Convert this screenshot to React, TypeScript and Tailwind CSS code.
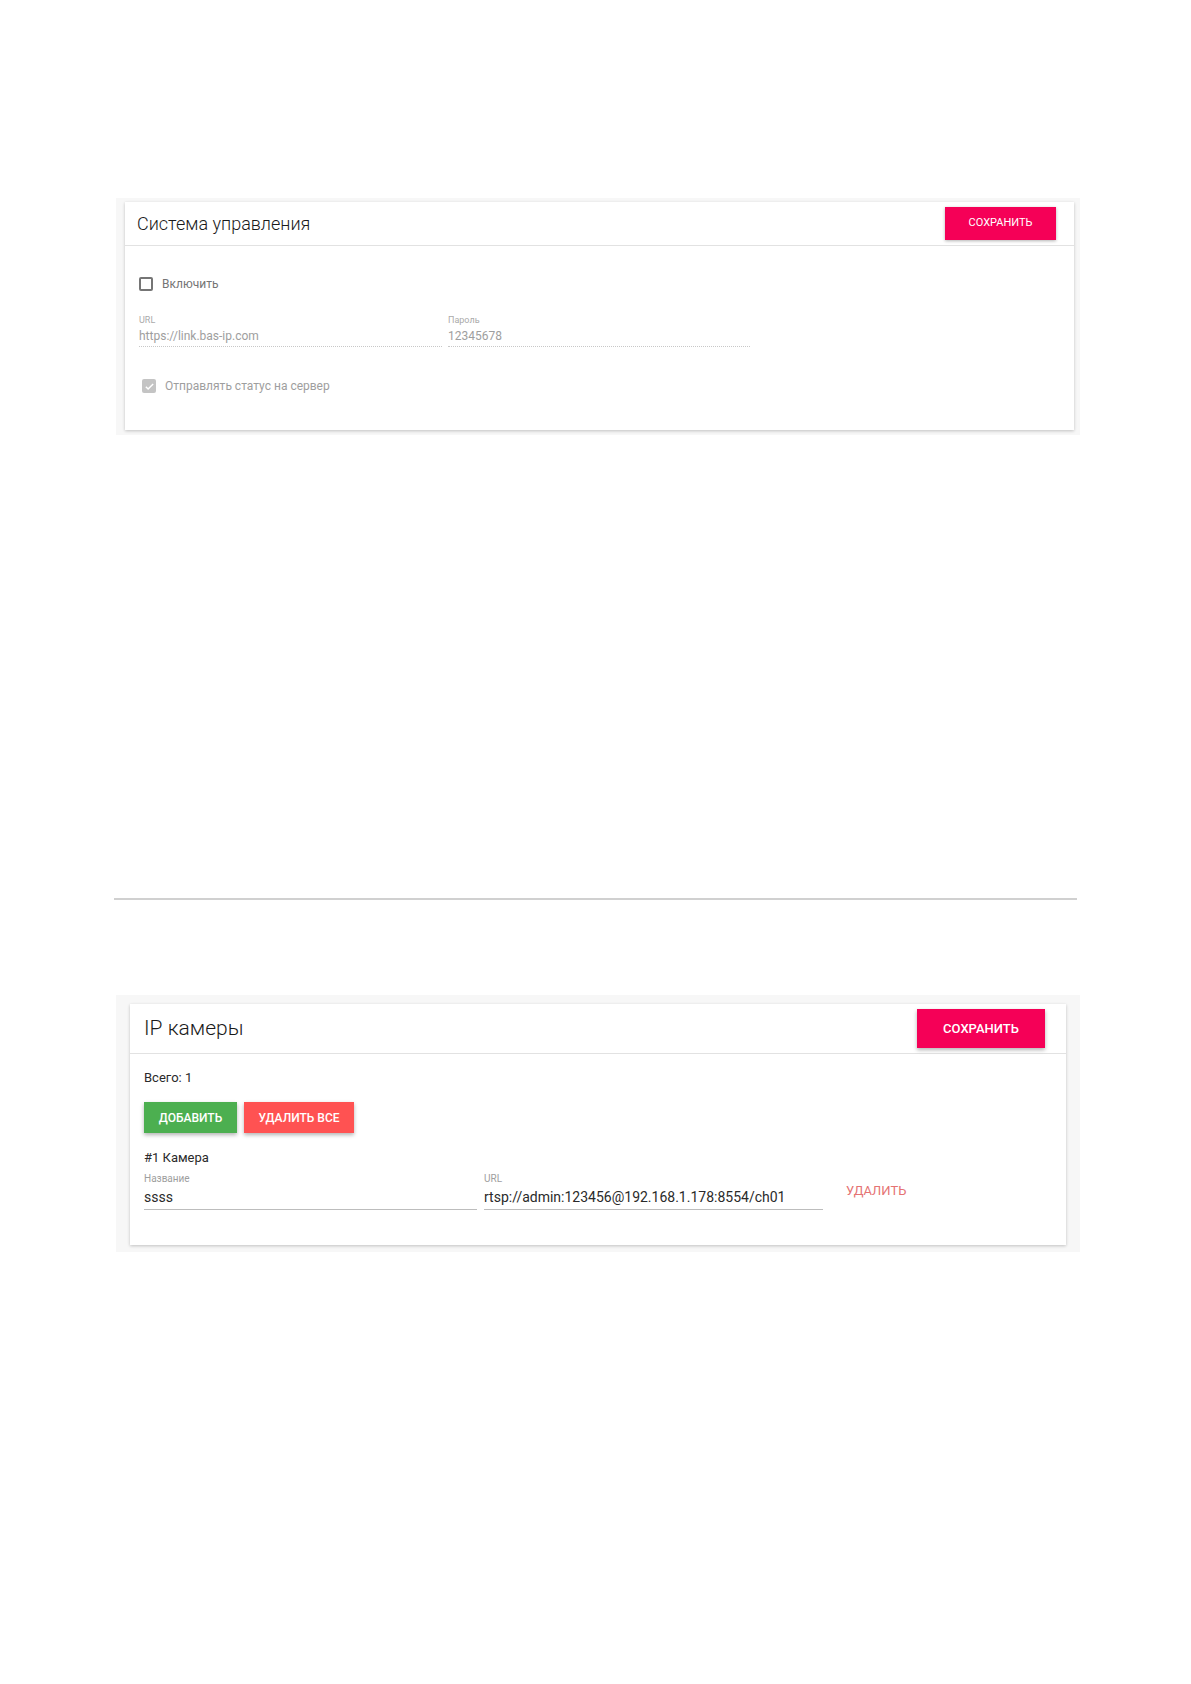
import React, { useState } from "react";

const font = { fontFamily: "Roboto, 'Liberation Sans', sans-serif" };

const ControlSystem = () => {
  const [enabled, setEnabled] = useState(false);

  return (
    <section className="ml-[116px] w-[964px] bg-[#f7f7f7] pl-[9px] pr-[6px] pt-[4px] pb-[5px]">
      <div className="bg-white shadow-[0_1px_3px_rgba(0,0,0,0.22)]">
        {/* шапка */}
        <div className="flex h-[44px] items-center justify-between border-b border-[#e2e2e2] pl-[12px] pr-[18px]">
          <h2 className="text-[18px] font-light text-[#1a1a1a] leading-none">Система управления</h2>
          <button
            type="button"
            className="h-[33px] w-[111px] bg-[#f50057] text-[11px] text-white uppercase shadow-[0_1px_3px_rgba(0,0,0,0.3)]"
          >
            Сохранить
          </button>
        </div>

        <div className="pl-[14px] pt-[28px] pb-[34px]">
          <label className="flex h-[20px] items-center gap-[9px] cursor-pointer">
            <span
              onClick={() => setEnabled(!enabled)}
              className={`h-[14px] w-[14px] rounded-[2px] border-2 ${
                enabled ? "border-[#f50057] bg-[#f50057]" : "border-[#757575]"
              }`}
            />
            <span className="text-[12px] text-[#757575]">Включить</span>
          </label>

          <div className="mt-[21px] flex gap-[6px]">
            <div className="w-[303px] border-b border-dotted border-[#c8c8c8] pb-[2px]">
              <div className="text-[9px] leading-[11px] text-[#aaaaaa]">URL</div>
              <div className="mt-[2px] text-[12px] leading-[16px] text-[#9e9e9e]">
                https://link.bas-ip.com
              </div>
            </div>
            <div className="w-[302px] border-b border-dotted border-[#c8c8c8] pb-[2px]">
              <div className="text-[9px] leading-[11px] text-[#aaaaaa]">Пароль</div>
              <div className="mt-[2px] text-[12px] leading-[16px] text-[#9e9e9e]">12345678</div>
            </div>
          </div>

          <div className="mt-[29px] flex h-[20px] items-center gap-[9px] pl-[3px]">
            <span className="flex h-[14px] w-[14px] items-center justify-center rounded-[2px] bg-[#c4c4c4]">
              <svg width="11" height="11" viewBox="0 0 24 24" fill="none">
                <path d="M4 12.5l5 5L20 6.5" stroke="#fff" strokeWidth="3.2" />
              </svg>
            </span>
            <span className="text-[12px] text-[#9e9e9e]">Отправлять статус на сервер</span>
          </div>
        </div>
      </div>
    </section>
  );
};

const IpCameras = () => {
  const cameras = [{ name: "ssss", url: "rtsp://admin:123456@192.168.1.178:8554/ch01" }];

  return (
    <section className="ml-[116px] w-[964px] bg-[#f7f7f7] px-[14px] pt-[9px] pb-[7px]">
      <div className="bg-white shadow-[0_1px_3px_rgba(0,0,0,0.22)]">
        <div className="flex h-[50px] items-center justify-between border-b border-[#e2e2e2] pl-[14px] pr-[21px]">
          <h2 className="text-[21px] font-light text-[#1a1a1a] leading-none">IP камеры</h2>
          <button
            type="button"
            className="h-[39px] w-[128px] bg-[#f50057] text-[13px] font-medium text-white uppercase shadow-[0_2px_4px_rgba(0,0,0,0.3)]"
          >
            Сохранить
          </button>
        </div>

        <div className="pl-[14px] pt-[15px] pb-[35px]">
          <div className="text-[13px] leading-[18px] text-[#2a2a2a]">Всего: {cameras.length}</div>

          <div className="mt-[15px] flex gap-[7px]">
            <button
              type="button"
              className="h-[31px] w-[93px] bg-[#4caf50] text-[12px] font-medium text-white uppercase shadow-[0_2px_4px_rgba(0,0,0,0.3)]"
            >
              Добавить
            </button>
            <button
              type="button"
              className="h-[31px] w-[110px] bg-[#ff5252] text-[12px] font-medium text-white uppercase shadow-[0_2px_4px_rgba(0,0,0,0.3)]"
            >
              Удалить все
            </button>
          </div>

          {cameras.map((c, i) => (
            <div key={i} className="mt-[16px]">
              <div className="text-[13px] leading-[18px] text-[#2a2a2a]">#{i + 1} Камера</div>
              <div className="mt-[6px] flex items-start gap-[7px]">
                <div className="w-[333px] border-b border-[#bdbdbd] pb-[3px]">
                  <div className="text-[10px] leading-[12px] text-[#9e9e9e]">Название</div>
                  <div className="mt-[3px] text-[14px] leading-[18px] text-[#2a2a2a]">{c.name}</div>
                </div>
                <div className="w-[339px] border-b border-[#bdbdbd] pb-[3px]">
                  <div className="text-[10px] leading-[12px] text-[#9e9e9e]">URL</div>
                  <div className="mt-[3px] text-[14px] leading-[18px] text-[#2a2a2a]">{c.url}</div>
                </div>
                <button
                  type="button"
                  className="ml-[16px] mt-[8px] text-[13px] text-[#e57373] uppercase"
                >
                  Удалить
                </button>
              </div>
            </div>
          ))}
        </div>
      </div>
    </section>
  );
};

export default function App() {
  return (
    <div className="min-h-[1684px] w-[1191px] bg-white pt-[198px]" style={font}>
      <ControlSystem />
      <div className="ml-[114px] mt-[463px] h-[2px] w-[963px] bg-[#d0d0d0]" />
      <div className="mt-[95px]">
        <IpCameras />
      </div>
    </div>
  );
}
